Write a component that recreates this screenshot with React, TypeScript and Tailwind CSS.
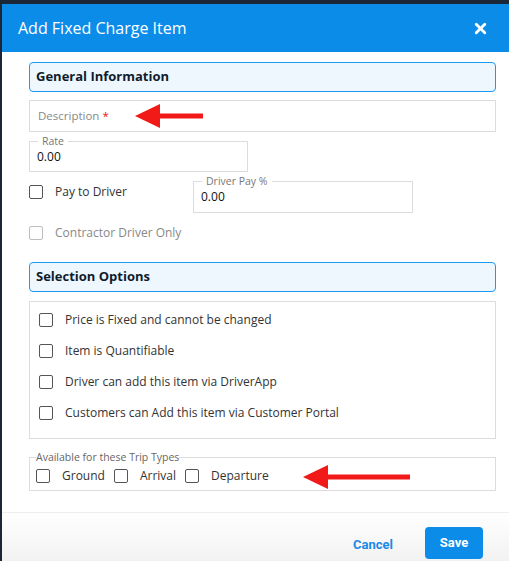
import { X } from "lucide-react";

const Box = ({ faded = false }: { faded?: boolean }) => (
  <span
    className={`block w-[14px] h-[14px] shrink-0 rounded-[2px] border-[1.5px] bg-white ${
      faded ? "border-[#bdbdbd]" : "border-[#555]"
    }`}
  />
);

// red annotation arrows drawn on top of the form
const Arrow = ({ width, className }: { width: number; className: string }) => (
  <svg width={width} height="26" viewBox={`0 0 ${width} 26`} className={`absolute ${className}`}>
    <polygon points="0,13 25,1 25,25" fill="#f21919" />
    <rect x="22" y="10.5" width={width - 22} height="5" fill="#f21919" />
  </svg>
);

const SectionHeader = ({ title }: { title: string }) => (
  <div className="h-[30px] flex items-center px-[6px] rounded-[4px] border-[1.5px] border-[#1a9af0] bg-[#eff7fe] text-[13px] font-bold text-[#101c2c]">
    {title}
  </div>
);

const Field = ({ label, value, className }: { label: string; value: string; className: string }) => (
  <div className={`relative border border-[#dcdcdc] ${className}`}>
    <span className="absolute left-[8px] -top-[7px] px-[4px] bg-white text-[10.5px] leading-[12px] text-[#777]">
      {label}
    </span>
    <div className="pl-[7px] pt-[8px] text-[12px] leading-[14px] text-[#111]">{value}</div>
  </div>
);

const Check = ({ label }: { label: string }) => (
  <div className="h-[14px] flex items-center gap-[12px]">
    <Box />
    <span className="text-[12px] leading-[14px] text-[#333]">{label}</span>
  </div>
);

const options = [
  "Price is Fixed and cannot be changed",
  "Item is Quantifiable",
  "Driver can add this item via DriverApp",
  "Customers can Add this item via Customer Portal",
];

export default function App() {
  return (
    <div className="w-[509px] h-[561px] bg-[#1b2736] pl-[2px] pt-[4px] overflow-hidden font-['Open_Sans',sans-serif]">
      <div className="h-full bg-white flex flex-col">
        <div className="h-[48px] shrink-0 bg-[#0b8ce9] flex items-center justify-between pl-[16px] pr-[20px]">
          <h1 className="text-[16px] text-white">Add Fixed Charge Item</h1>
          <X className="w-[17px] h-[17px] text-white" strokeWidth={4} />
        </div>

        <div className="flex-1 pl-[27px] pt-[10px]">
          <div className="w-[467px] flex flex-col">
            <SectionHeader title="General Information" />

            <div className="relative mt-[8px] h-[32px] border border-[#dcdcdc] flex items-center pl-[8px]">
              <span className="text-[11.5px] text-[#888]">
                Description <span className="text-[#e11]">*</span>
              </span>
              <Arrow width={68} className="left-[105px] top-[2px]" />
            </div>

            <Field label="Rate" value="0.00" className="mt-[9px] w-[219px] h-[31px]" />

            <div className="mt-[9px] flex items-start">
              <div className="w-[164px] pt-[4px]">
                <Check label="Pay to Driver" />
              </div>
              <Field label="Driver Pay %" value="0.00" className="w-[220px] h-[32px]" />
            </div>

            <div className="mt-[13px] h-[14px] flex items-center gap-[12px]">
              <Box faded />
              <span className="text-[12px] leading-[14px] text-[#888]">Contractor Driver Only</span>
            </div>

            <div className="mt-[22px]">
              <SectionHeader title="Selection Options" />
            </div>

            <div className="mt-[9px] h-[138px] border border-[#dcdcdc] pl-[9px] pt-[11px] flex flex-col gap-[17px]">
              {options.map((o) => (
                <Check key={o} label={o} />
              ))}
            </div>

            <div className="relative mt-[18px] h-[34px] border border-[#dcdcdc] flex items-center gap-[9px] pl-[6px] pt-[3px]">
              <span className="absolute left-[6px] -top-[7px] bg-white text-[10.5px] leading-[12px] text-[#666]">
                Available for these Trip Types
              </span>
              <Check label="Ground" />
              <Check label="Arrival" />
              <Check label="Departure" />
              <Arrow width={107} className="left-[273px] top-[6px]" />
            </div>
          </div>
        </div>

        <div className="h-[49px] shrink-0 border-t border-[#eeeeee] bg-gradient-to-b from-white to-[#f2f2f2] flex items-start justify-end pt-[14px] pr-[26px] gap-[32px] font-['Roboto',sans-serif]">
          <span className="mt-[8px] text-[13px] font-bold text-[#1a8ae6]">Cancel</span>
          <button className="w-[58px] h-[32px] rounded-[4px] bg-[#0b8ce9] text-white text-[13px] font-bold">Save</button>
        </div>
      </div>
    </div>
  );
}
